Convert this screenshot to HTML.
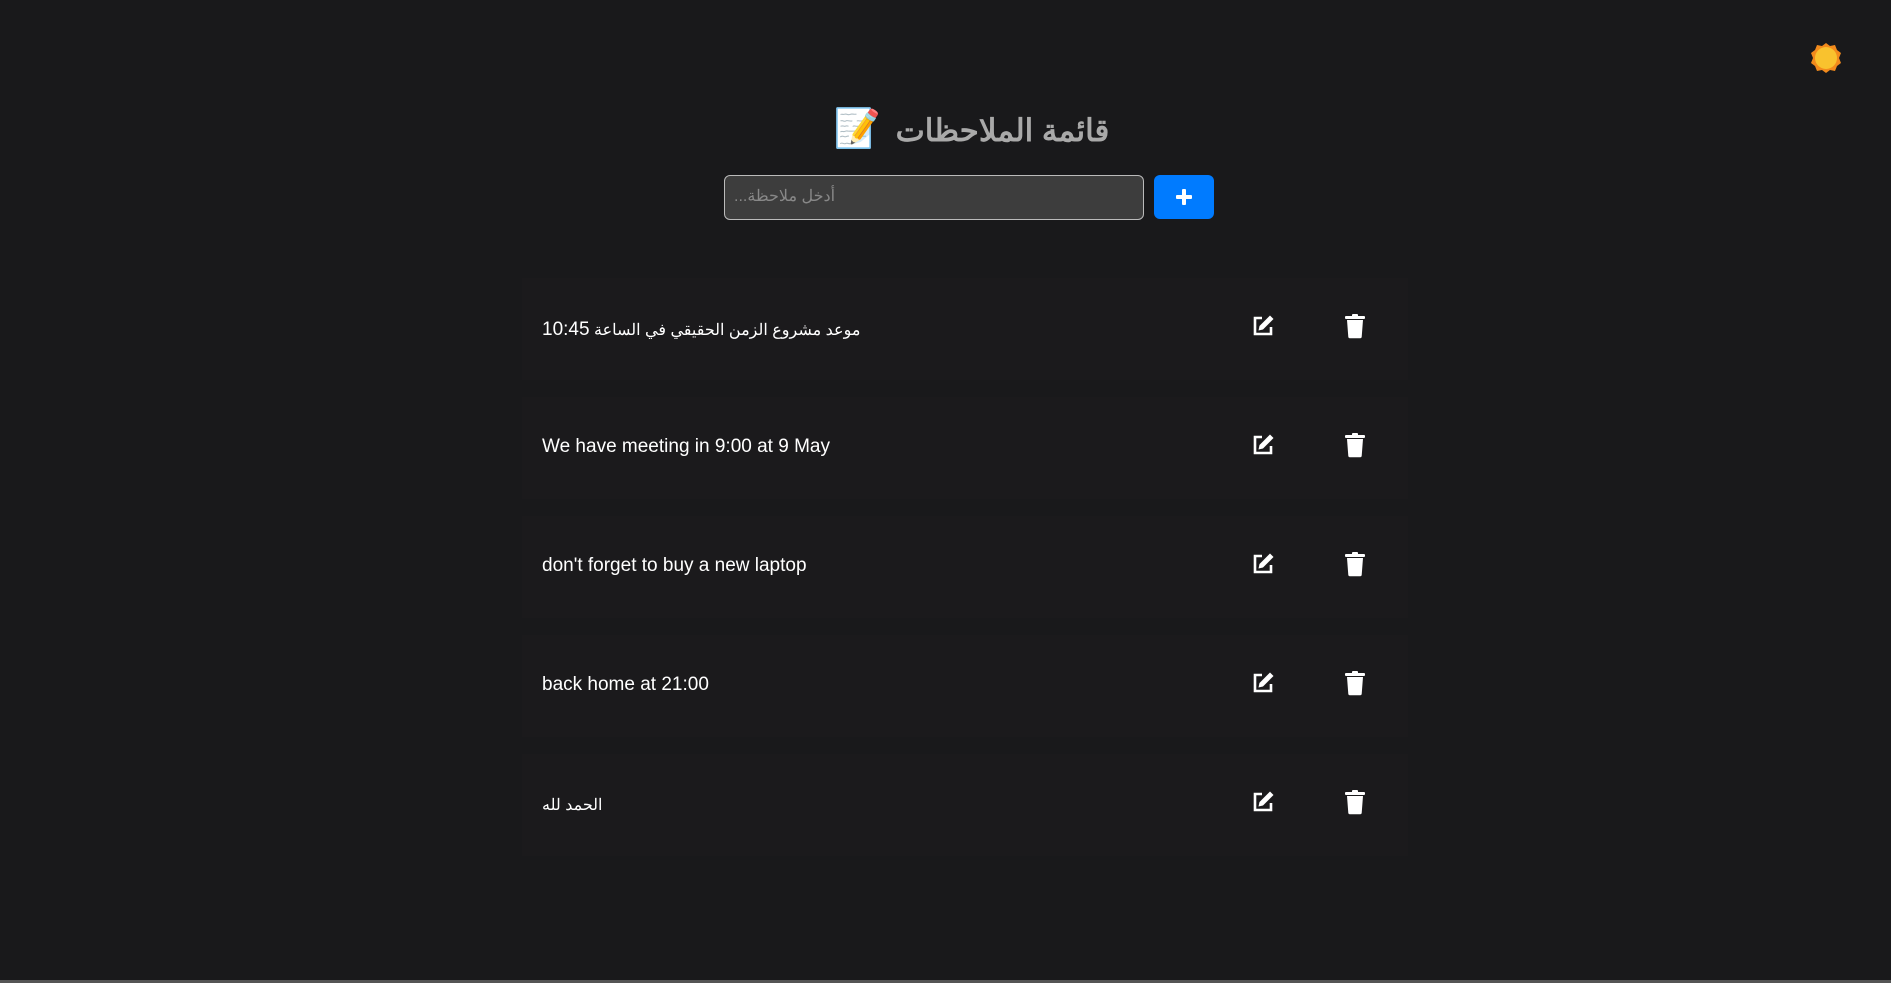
<!DOCTYPE html>
<html><head><meta charset="utf-8"><style>
html,body{margin:0;padding:0}
body{width:1891px;height:983px;background:#19191b;font-family:"Liberation Sans","Noto Sans CJK SC",sans-serif;position:relative;overflow:hidden;border-bottom:3px solid #555;box-sizing:border-box}
.title{position:absolute;top:107px;left:26px;width:1891px;text-align:center;color:#a9a9a9;font-size:31px;font-weight:bold;direction:rtl}
.inp{position:absolute;left:724px;top:175px;width:420px;height:45px;border:1px solid #bbb;border-radius:6px;background:#3d3d3d;color:#888;font-size:16px;direction:rtl;box-sizing:border-box}
.inp span{position:absolute;left:9px;top:10px;white-space:nowrap}
.btn{position:absolute;left:1154px;top:175px;width:60px;height:44px;background:#007bff;border-radius:6px}
.card{position:absolute;left:522px;width:886px;height:102px;background:#1b1a1c}
.card .t{position:absolute;left:20px;top:39px;color:#fff;font-size:19px;white-space:nowrap}
.card .ar{font-size:16px;top:41px}
.card svg{position:absolute;top:39px}
</style></head><body>
<svg style="position:absolute;left:1810px;top:42px" width="32" height="32" viewBox="0 0 32 32"><polygon points="16,1 20,4 25,3 27,8 31,11 29,16 31,21 27,24 25,29 20,28 16,31 12,28 7,29 5,24 1,21 3,16 1,11 5,8 7,3 12,4" fill="#f28a1c"/><circle cx="16" cy="16" r="11" fill="#f9c22e"/></svg>
<div class="title">قائمة الملاحظات <span style="font-size:38px;margin-right:6px">📝</span></div>
<div class="inp"><span>أدخل ملاحظة...</span></div>
<div class="btn"><svg width="60" height="44"><rect x="22" y="20" width="16" height="4" rx="1" fill="#fff"/><rect x="28" y="14" width="4" height="16" rx="1" fill="#fff"/></svg></div>

<div class="card" style="top:278px"><div class="t ar" dir="rtl">موعد مشروع الزمن الحقيقي في الساعة <span style="font-size:19px">10:45</span></div></div>
<div class="card" style="top:397px"><div class="t">We have meeting in 9:00 at 9 May</div></div>
<div class="card" style="top:516px"><div class="t">don't forget to buy a new laptop</div></div>
<div class="card" style="top:635px"><div class="t">back home at 21:00</div></div>
<div class="card" style="top:754px"><div class="t ar" dir="rtl">الحمد لله</div></div>

<div id="icons"></div>
<script>
var tops=[278,397,516,635,754];
var h='';
tops.forEach(function(t){
h+='<svg style="position:absolute;left:1251px;top:'+(t+36)+'px" width="24" height="24" viewBox="0 0 24 24"><path d="M11 4H4v16h16v-7" fill="none" stroke="#fff" stroke-width="2.6"/><path d="M19 1.5l3.5 3.5L12 15.5l-4.5 1 1-4.5z" fill="#fff"/></svg>';
h+='<svg style="position:absolute;left:1344px;top:'+(t+35)+'px" width="22" height="26" viewBox="0 0 22 26"><rect x="1" y="3" width="20" height="3" rx="1" fill="#fff"/><rect x="8" y="1" width="6" height="3" rx="1" fill="#fff"/><path d="M3 7h16l-1.3 17a1.5 1.5 0 0 1-1.5 1.3H5.8a1.5 1.5 0 0 1-1.5-1.3z" fill="#fff"/></svg>';
});
document.getElementById('icons').innerHTML=h;
</script>
</body></html>
